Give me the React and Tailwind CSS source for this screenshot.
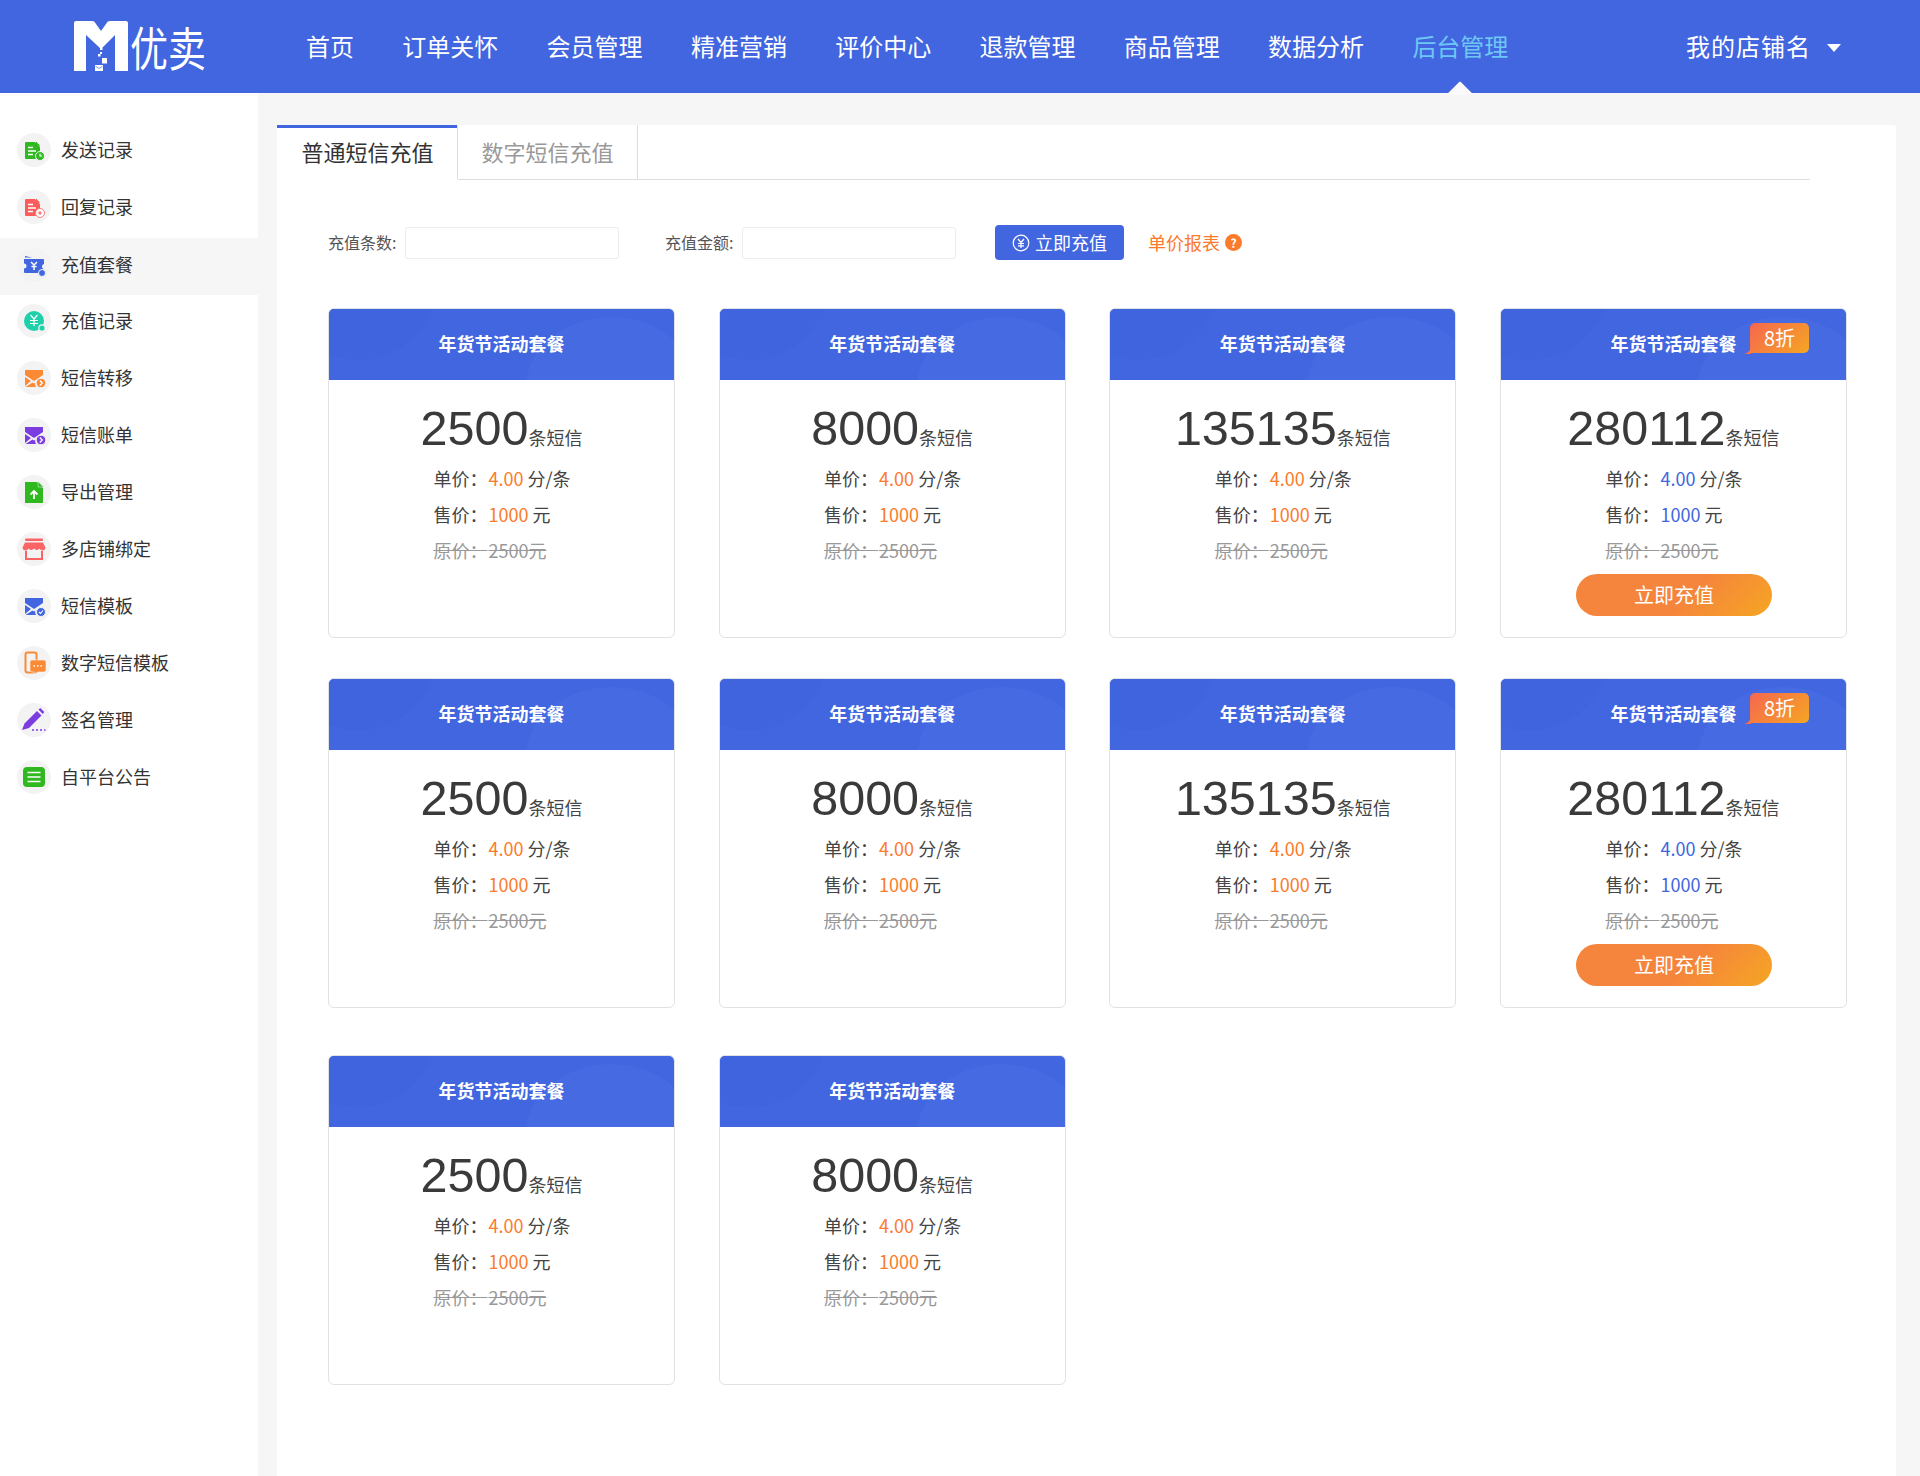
import React from "react";

const CJK = "font-['Noto_Sans_CJK_SC','Noto_Sans',sans-serif]";

const Doc = ({ color, badge }) => (
  <>
    <path d="M6 6h9l5 5v5.500a4.500 4.500 0 0 0-4 6.500H6a1 1 0 0 1-1-1V7a1 1 0 0 1 1-1z" fill={color} />
    <path d="M16 5.500l4.200 4.300H16z" fill={color} />
    <path d="M8 11.500h5M8 15h8M8 18.500h5" stroke="#fff" strokeWidth="1.600" />
    {badge}
  </>
);

const Env = ({ color, mark }) => (
  <>
    <path d="M5 6h18v5l-9 6-9-6z" fill={color} />
    <path d="M5 13l6 4-6 5zM12.500 18.500l1.500 1 1.300-.8A5.500 5.500 0 0 0 16 23H5.500z" fill={color} />
    {mark}
  </>
);

const arrowBadge = (c) => (
  <>
    <circle cx="21" cy="19" r="4.800" fill={c} stroke="#f4f4f4" strokeWidth="1" />
    <path d="M19.800 16.500l2.500 2.500-2.500 2.500" stroke="#fff" strokeWidth="1.300" fill="none" />
  </>
);

const icons = [
  <Doc key="a" color="#2fb81f" badge={<><circle cx="20" cy="20" r="4.500" fill="#2fb81f" stroke="#f4f4f4" /><path d="M20 17.500V20h2.200" stroke="#fff" strokeWidth="1.100" fill="none" /></>} />,
  <Doc key="b" color="#fb5c5c" badge={<><circle cx="20" cy="20" r="4.500" fill="#fff" stroke="#fb7c7c" /><circle cx="20" cy="20" r="1.700" fill="#fb7c7c" /></>} />,
  <g key="c">
    <path d="M5 5l7 1.500h-7z" fill="#4166e0" />
    <path d="M4 8h19a1 1 0 0 1 1 1v4a2.500 2.500 0 0 0-1 4.500V22H5a1 1 0 0 1-1-1v-3.500a2.500 2.500 0 0 0 0-5z" fill="#4166e0" />
    <path d="M11 11l3 3 3-3M14 14v5M11.500 15.500h5" stroke="#fff" strokeWidth="1.500" fill="none" />
    <circle cx="22" cy="22" r="3.500" fill="#4166e0" stroke="#f4f4f4" />
  </g>,
  <g key="d">
    <circle cx="14" cy="14" r="10" fill="#1fd0aa" />
    <path d="M10.500 8l3.500 4 3.500-4M14 12v7M10 13.500h8M10 16.500h8" stroke="#fff" strokeWidth="1.200" fill="none" />
    <circle cx="22" cy="21" r="3.200" fill="#1fd0aa" stroke="#f4f4f4" strokeWidth="1.200" />
  </g>,
  <Env key="e" color="#fb8a35" mark={arrowBadge("#fb8a35")} />,
  <Env key="f" color="#7b3ce0" mark={arrowBadge("#7b3ce0")} />,
  <g key="g">
    <path d="M5 4h12l6 6v15H5z" fill="#2fb81f" />
    <path d="M18 3.500l5.500 5.500H18z" fill="#2fb81f" stroke="#f4f4f4" strokeWidth=".5" />
    <path d="M14 21v-8M10.500 16.500L14 13l3.500 3.500" stroke="#fff" strokeWidth="1.800" fill="none" />
  </g>,
  <g key="h">
    <rect x="5" y="3.500" width="18" height="2.500" rx="1" fill="#fb6464" />
    <path d="M5 7.500h18l2.500 5a3 3 0 0 1-5.800 1 3.500 3.500 0 0 1-5.700 0 3.500 3.500 0 0 1-5.700 0 3 3 0 0 1-5.800-1z" fill="#fb6464" />
    <path d="M6 16v8h16v-8" fill="none" stroke="#fb6464" strokeWidth="2" />
  </g>,
  <Env key="i" color="#4166e0" mark={<><circle cx="21" cy="20" r="4.500" fill="#4166e0" stroke="#f4f4f4" /><path d="M19 20l1.500 1.500 2.500-3" stroke="#fff" strokeWidth="1.100" fill="none" /></>} />,
  <g key="j">
    <rect x="5.500" y="3.500" width="11" height="20" rx="2" fill="none" stroke="#fb8a35" strokeWidth="2" />
    <path d="M12 11h12a2 2 0 0 1 2 2v8a2 2 0 0 1-2 2h-6l-3 2v-2h-3a2 2 0 0 1-2-2v-8a2 2 0 0 1 2-2z" fill="#fb8a35" stroke="#f4f4f4" strokeWidth=".6" />
    <path d="M13.500 17h1.500M17 17h1.500M20.500 17H22" stroke="#fff" strokeWidth="1.600" />
  </g>,
  <g key="k">
    <path d="M2 24l2.500-6.500L17 5l4.500 4.500L9 22z" fill="#7b3ce0" />
    <path d="M18.500 3.500l1.800-1.500 4 4-1.600 1.900z" fill="#7b3ce0" />
    <path d="M12 24h2M16 24h2M20 24h2M24 24h1.500" stroke="#7b3ce0" strokeWidth="1.400" />
  </g>,
  <g key="l">
    <rect x="3" y="4" width="22" height="20" rx="4" fill="#2fb81f" />
    <path d="M7.500 9.500h13M7.500 14h13M7.500 18.500h13" stroke="#fff" strokeWidth="1.500" />
  </g>,
];

const menu = ["发送记录", "回复记录", "充值套餐", "充值记录", "短信转移", "短信账单", "导出管理", "多店铺绑定", "短信模板", "数字短信模板", "签名管理", "自平台公告"];
const nav = ["首页", "订单关怀", "会员管理", "精准营销", "评价中心", "退款管理", "商品管理", "数据分析", "后台管理"];

function Logo() {
  return (
    <div className="flex items-center w-[135px]">
      <svg width="54" height="50" viewBox="0 0 54 50" className="shrink-0">
        <path d="M2 0H18C20 0 21 1 22 3L27 10L32 3C33 1 34 0 36 0H52a2 2 0 0 1 2 2V50H41V14L27 28L12 14V50H0V2a2 2 0 0 1 2-2z" fill="#fff" />
        <path d="M26 26.500h2.500v2.500H26zM24 33h2.500v2.500H24zM28 37h5v5.500h-5zM26 31h2v2h-2zM21 44h8v6h-8z" fill="#fff" />
        <path d="M21.500 45.200l3.500 2.300 3.500-2.300" stroke="#4166e0" strokeWidth=".7" fill="none" />
      </svg>
      <span className={`${CJK} text-[38px] leading-none text-white scale-y-[1.22] whitespace-nowrap ml-[2px]`}>优卖</span>
    </div>
  );
}

function Header() {
  return (
    <header className="h-[93px] bg-[#4166e0] flex items-center relative">
      <div className="pl-[74px] w-[306px] shrink-0 -mt-[1px]">
        <Logo />
      </div>
      <nav className="flex gap-[48.3px] text-[24px] text-white whitespace-nowrap -mt-[1px]">
        {nav.map((n, i) => (
          <span key={n} className={i === 8 ? "relative text-[#6ec6f5]" : ""}>
            {n}
            {i === 8 && (
              <span className="absolute left-1/2 -translate-x-1/2 top-[57px] w-[20px] h-[20px] bg-[#fafafa] rotate-45 rounded-tl-[2px] [clip-path:polygon(0_0,100%_0,0_100%)]" />
            )}
          </span>
        ))}
      </nav>
      <div className="ml-auto mr-[79px] flex items-center text-[24px] tracking-[1px] text-white -mt-[1px]">
        我的店铺名
        <span className="ml-[16px] mt-[3px] w-0 h-0 border-x-[7.5px] border-x-transparent border-t-[8px] border-t-white" />
      </div>
    </header>
  );
}

function Sidebar() {
  return (
    <aside className="w-[258px] shrink-0 bg-white pt-[28px] pb-[40px]">
      {menu.map((m, i) => (
        <div
          key={m}
          className={`flex items-center h-[57px] pl-[17px] ${i === 2 ? "bg-[#f6f6f6] mt-[3px] -mb-[3px] pb-[4px]" : ""}`}
        >
          <span className="w-[34px] h-[34px] rounded-full bg-[#f3f3f3] flex items-center justify-center shrink-0">
            <svg width="28" height="28" viewBox="0 0 28 28">{icons[i]}</svg>
          </span>
          <span className="ml-[10px] -mt-[1px] text-[18px] text-[#333] whitespace-nowrap">{m}</span>
        </div>
      ))}
    </aside>
  );
}

function Card({ count, promo }) {
  const accent = promo ? "text-[#4166e0] ml-[1px]" : "text-[#fb7a2b] ml-[1px]";
  return (
    <div className="h-[330px] bg-white border border-[#e2e2e2] rounded-[6px] overflow-hidden">
      <div className="relative h-[72px] -mx-[1px] -mt-[1px] bg-[#4166e0] overflow-hidden flex items-center justify-center">
        <span className="absolute -left-[50px] -top-[108px] w-[160px] h-[160px] rounded-full bg-[#3f64dd]" />
        <span className="absolute left-[198px] top-[9px] w-[170px] h-[140px] rounded-[50%] bg-[#456ae2]" />
        <span className="relative text-[18px] font-bold text-white -mt-[1px]">年货节活动套餐</span>
        {promo && (
          <>
            <svg width="8" height="6" viewBox="0 0 8 6" className="absolute left-[244px] top-[40px]">
              <path d="M7 0v6H0c3-.800 6-3 7-6z" fill="#f66e4f" />
            </svg>
            <span className="absolute left-[250px] top-[15px] w-[59px] h-[30px] rounded-[5px] rounded-bl-none bg-[linear-gradient(135deg,#f6664f,#f5a623)] flex items-center justify-center text-[20px] text-white leading-none">
              8折
            </span>
          </>
        )}
      </div>
      <div className="flex flex-col items-center">
        <div className="flex items-baseline mt-[17px] h-[62px]">
          <span className="font-['Liberation_Sans',sans-serif] text-[48.5px] leading-[62px] text-[#3a3a3a]">{count}</span>
          <span className="text-[18px] text-[#444]">条短信</span>
        </div>
        <div className="w-fit text-[18px] leading-[36px] text-[#444] ml-[1px] mt-[1px]">
          <div>单价：<span className={accent}>4.00</span> 分/条</div>
          <div>售价：<span className={accent}>1000</span> 元</div>
          <div className="text-[#999] line-through">原价：<span className="ml-[1px]">2500元</span></div>
        </div>
        {promo && (
          <button className="mt-[6px] ml-[1px] w-[196px] h-[42px] rounded-full bg-[linear-gradient(135deg,#f5843c_0%,#f5843c_55%,#f5a623_100%)] text-[20px] text-white">
            立即充值
          </button>
        )}
      </div>
    </div>
  );
}

const rows = [
  [["2500"], ["8000"], ["135135"], ["280112", true]],
  [["2500"], ["8000"], ["135135"], ["280112", true]],
  [["2500"], ["8000"]],
];

function Panel() {
  return (
    <section className="ml-[19px] mr-[24px] flex-1 bg-white rounded-t-[3px] pb-[92px]">
      <div className="flex mr-[86px] border-b border-[#dedede] h-[55px]">
        <div className="w-[181px] -mb-[1px] h-[56px] border-t-[3px] border-[#4166e0] bg-white flex items-center justify-center text-[22px] text-[#333] pb-[6px]">
          普通短信充值
        </div>
        <div className="w-[181px] border-x border-[#dedede] flex items-center justify-center text-[22px] text-[#999] -ml-[1px] pb-[2px]">
          数字短信充值
        </div>
      </div>
      <div className="flex items-center h-[35px] mt-[45px] ml-[51px] text-[16px] text-[#555]">
        <label className="w-[69px] whitespace-nowrap -mt-[1px]">充值条数:</label>
        <input className="ml-[8px] w-[214px] h-[32px] border border-[#ececec] rounded-[3px] bg-white" />
        <label className="ml-[46px] w-[69px] whitespace-nowrap -mt-[1px]">充值金额:</label>
        <input className="ml-[8px] w-[214px] h-[32px] border border-[#ececec] rounded-[3px] bg-white" />
        <button className="ml-[39px] w-[129px] h-[35px] rounded-[4px] bg-[#4166e0] text-white text-[18px] flex items-center justify-center gap-[5px]">
          <svg width="18" height="18" viewBox="0 0 18 18" fill="none" stroke="#fff" strokeWidth="1.200">
            <circle cx="9" cy="9" r="7.800" />
            <path d="M6 5l3 3.500L12 5M9 8.500V14M6 9.500h6M6 11.800h6" />
          </svg>
          立即充值
        </button>
        <span className="ml-[24px] text-[#fb7a2b] text-[18px] flex items-center gap-[5px]">
          单价报表
          <span className="w-[17px] h-[17px] rounded-full bg-[#fb7a2b] text-white text-[12px] font-bold flex items-center justify-center leading-none">?</span>
        </span>
      </div>
      <div className="mt-[48px] ml-[51px] flex flex-col">
        {rows.map((r, i) => (
          <div
            key={i}
            className={`grid grid-cols-[repeat(4,347px)] gap-x-[43.67px] ${i === 0 ? "mb-[40px]" : i === 1 ? "mb-[47px]" : ""}`}
          >
            {r.map(([count, promo], j) => (
              <Card key={j} count={count} promo={promo} />
            ))}
          </div>
        ))}
      </div>
    </section>
  );
}

export default function App() {
  return (
    <div className={`${CJK} min-h-[1476px] bg-[#f6f6f6] flex flex-col`}>
      <Header />
      <div className="flex flex-1 pt-0">
        <Sidebar />
        <div className="flex-1 flex pt-[32px]">
          <Panel />
        </div>
      </div>
    </div>
  );
}
